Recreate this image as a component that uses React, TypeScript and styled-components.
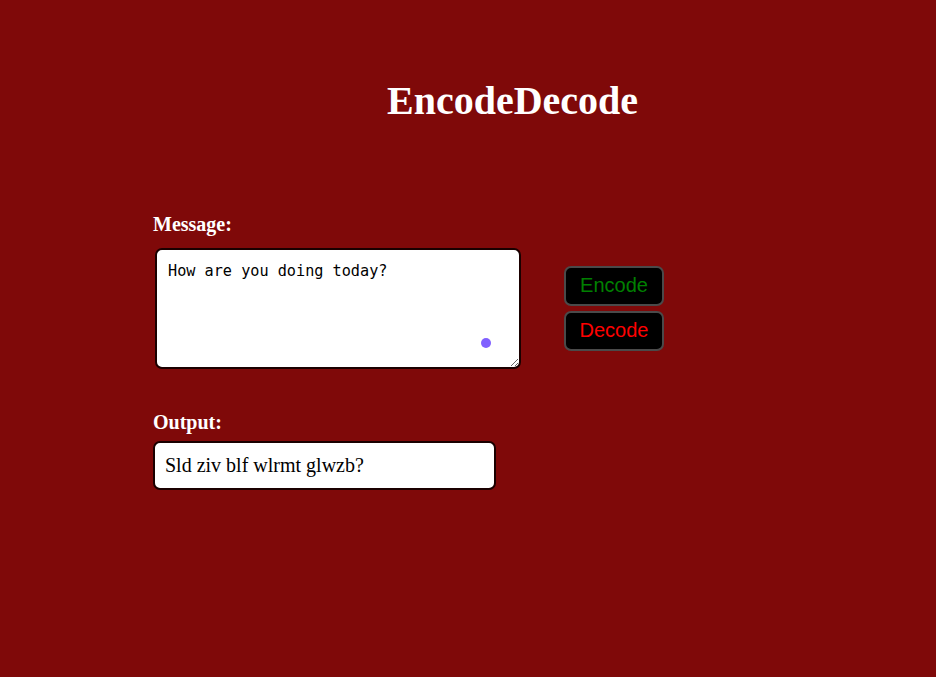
import React from "react";
import styled, { createGlobalStyle } from "styled-components";

const GlobalStyle = createGlobalStyle`
  html, body {
    margin: 0;
    padding: 0;
    background-color: #7f0909;
  }
  body {
    font-family: "Liberation Serif", "Times New Roman", serif;
    min-height: 100vh;
  }
`;

const Page = styled.div`
  min-height: 677px;
  background-color: #7f0909;
  padding-top: 78px;
  box-sizing: border-box;
`;

const Title = styled.h1`
  margin: 0;
  padding-left: 89px;
  text-align: center;
  color: #ffffff;
  font-size: 40px;
  font-weight: 700;
  line-height: 46px;
`;

const Form = styled.div`
  margin-top: 89px;
  padding-left: 153px;
  display: flex;
  flex-direction: column;
`;

const Label = styled.label`
  display: block;
  color: #ffffff;
  font-size: 20px;
  font-weight: 700;
  line-height: 22px;
`;

const InputRow = styled.div`
  display: flex;
  align-items: flex-start;
  gap: 43px;
  margin-top: 13px;
  margin-left: 2px;
`;

const TextWrap = styled.div`
  position: relative;
`;

const MessageBox = styled.textarea`
  display: block;
  width: 366px;
  height: 121px;
  box-sizing: border-box;
  padding: 12px 11px;
  border: 2px solid #1a0000;
  border-radius: 7px;
  background: #ffffff;
  font-family: "DejaVu Sans Mono", "Liberation Mono", monospace;
  font-size: 15.2px;
  line-height: 18px;
  color: #000000;
  resize: both;
  outline: none;
`;

const Dot = styled.span`
  position: absolute;
  left: 326px;
  top: 90px;
  width: 10px;
  height: 10px;
  border-radius: 50%;
  background: #8060ff;
`;

const Buttons = styled.div`
  display: flex;
  flex-direction: column;
  gap: 5px;
  margin-top: 18px;
`;

const ActionButton = styled.button<{ $tone: string }>`
  width: 100px;
  height: 40px;
  box-sizing: border-box;
  background: #000000;
  border: 2px solid #4a4a4a;
  border-radius: 7px;
  color: ${(p) => p.$tone};
  font-family: "Liberation Sans", Arial, sans-serif;
  font-size: 20px;
  padding: 0 0 2px;
  cursor: pointer;
`;

const OutputBox = styled.div`
  width: 343px;
  height: 49px;
  box-sizing: border-box;
  margin-top: 8px;
  padding: 0 10px 1px;
  display: flex;
  align-items: center;
  background: #ffffff;
  border: 2px solid #1a0000;
  border-radius: 7px;
  font-size: 20px;
  color: #000000;
`;

const Spacer = styled.div`
  height: 42px;
`;

export default function App() {
  return (
    <>
      <GlobalStyle />
      <Page>
        <Title>EncodeDecode</Title>
        <Form>
          <Label>Message:</Label>
          <InputRow>
            <TextWrap>
              <MessageBox defaultValue="How are you doing today?" />
              <Dot />
            </TextWrap>
            <Buttons>
              <ActionButton $tone="#008000">Encode</ActionButton>
              <ActionButton $tone="#ff0000">Decode</ActionButton>
            </Buttons>
          </InputRow>
          <Spacer />
          <Label>Output:</Label>
          <OutputBox>Sld ziv blf wlrmt glwzb?</OutputBox>
        </Form>
      </Page>
    </>
  );
}
